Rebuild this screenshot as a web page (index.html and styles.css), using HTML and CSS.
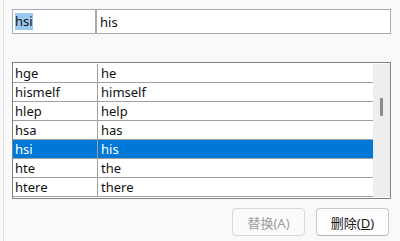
FILE: index.html
```html
<!DOCTYPE html>
<html lang="zh-CN">
<head>
  <meta charset="UTF-8">
  <title>自动更正</title>
  <link rel="stylesheet" href="styles.css">
</head>
<body>
  <div class="pane">
    <div class="entry">
      <div class="field key"><span class="sel">hsi</span></div>
      <div class="field value">his</div>
    </div>

    <div class="list">
      <div class="rows">
        <div class="row"><div class="cell">hge</div><div class="cell">he</div></div>
        <div class="row"><div class="cell">hismelf</div><div class="cell">himself</div></div>
        <div class="row"><div class="cell">hlep</div><div class="cell">help</div></div>
        <div class="row"><div class="cell">hsa</div><div class="cell">has</div></div>
        <div class="row active"><div class="cell">hsi</div><div class="cell">his</div></div>
        <div class="row"><div class="cell">hte</div><div class="cell">the</div></div>
        <div class="row"><div class="cell">htere</div><div class="cell">there</div></div>
      </div>
      <div class="scrollbar"><div class="thumb"></div></div>
    </div>

    <div class="actions">
      <button class="btn" disabled>替换(A)</button>
      <button class="btn">删除(<u>D</u>)</button>
    </div>
  </div>
</body>
</html>
```

FILE: styles.css
```css
body {
  margin: 0;
  background: #f9f9f9;
  font-family: "Noto Sans", "Noto Sans CJK SC", sans-serif;
  font-size: 13px;
  color: #111;
}
.pane {
  margin-left: 3px;
  border-left: 1px solid #e2e2e2;
  height: 241px;
  box-sizing: border-box;
  padding: 9px 9px 0 8px;
}
.entry {
  display: flex;
  height: 25px;
}
.field {
  border: 1px solid #aaaab2;
  background: #fff;
  display: flex;
  align-items: center;
  padding-left: 2px;
}
.key {
  width: 84px;
  box-sizing: border-box;
}
.value {
  flex: 1;
  padding-left: 3px;
}
.sel {
  background: #99c9ef;
  line-height: 17px;
}
.list {
  margin-top: 28px;
  display: flex;
  border: 1px solid #80808a;
  background: #fff;
  padding: 1px 0;
}
.rows {
  flex: 1;
}
.row {
  display: flex;
  height: 18px;
  border-bottom: 1px solid #a0a0a0;
  align-items: center;
}
.cell {
  padding-left: 2px;
}
.cell:first-child {
  width: 82px;
  height: 100%;
  display: flex;
  align-items: center;
  border-right: 1px solid #a0a0a0;
}
.cell + .cell {
  padding-left: 3px;
}
.row.active {
  background: #0078d7;
  color: #fff;
}
.scrollbar {
  width: 17px;
  background: #eeeeee;
  position: relative;
}
.thumb {
  position: absolute;
  left: 7px;
  top: 34px;
  width: 3px;
  height: 18px;
  border-radius: 1px;
  background: #8a8a8a;
}
.actions {
  display: flex;
  justify-content: flex-end;
  gap: 11px;
  margin-top: 9px;
  padding-right: 2px;
}
.btn {
  width: 73px;
  height: 28px;
  border: 1px solid #c8c8c8;
  border-bottom-color: #b4b4b4;
  border-radius: 4px;
  background: #fdfdfd;
  font-family: inherit;
  font-size: 13px;
  color: #1a1a1a;
  padding: 0;
}
.btn:disabled {
  border-color: #d8d8d8;
  background: #fafafa;
  color: #9d9d9d;
}
```
